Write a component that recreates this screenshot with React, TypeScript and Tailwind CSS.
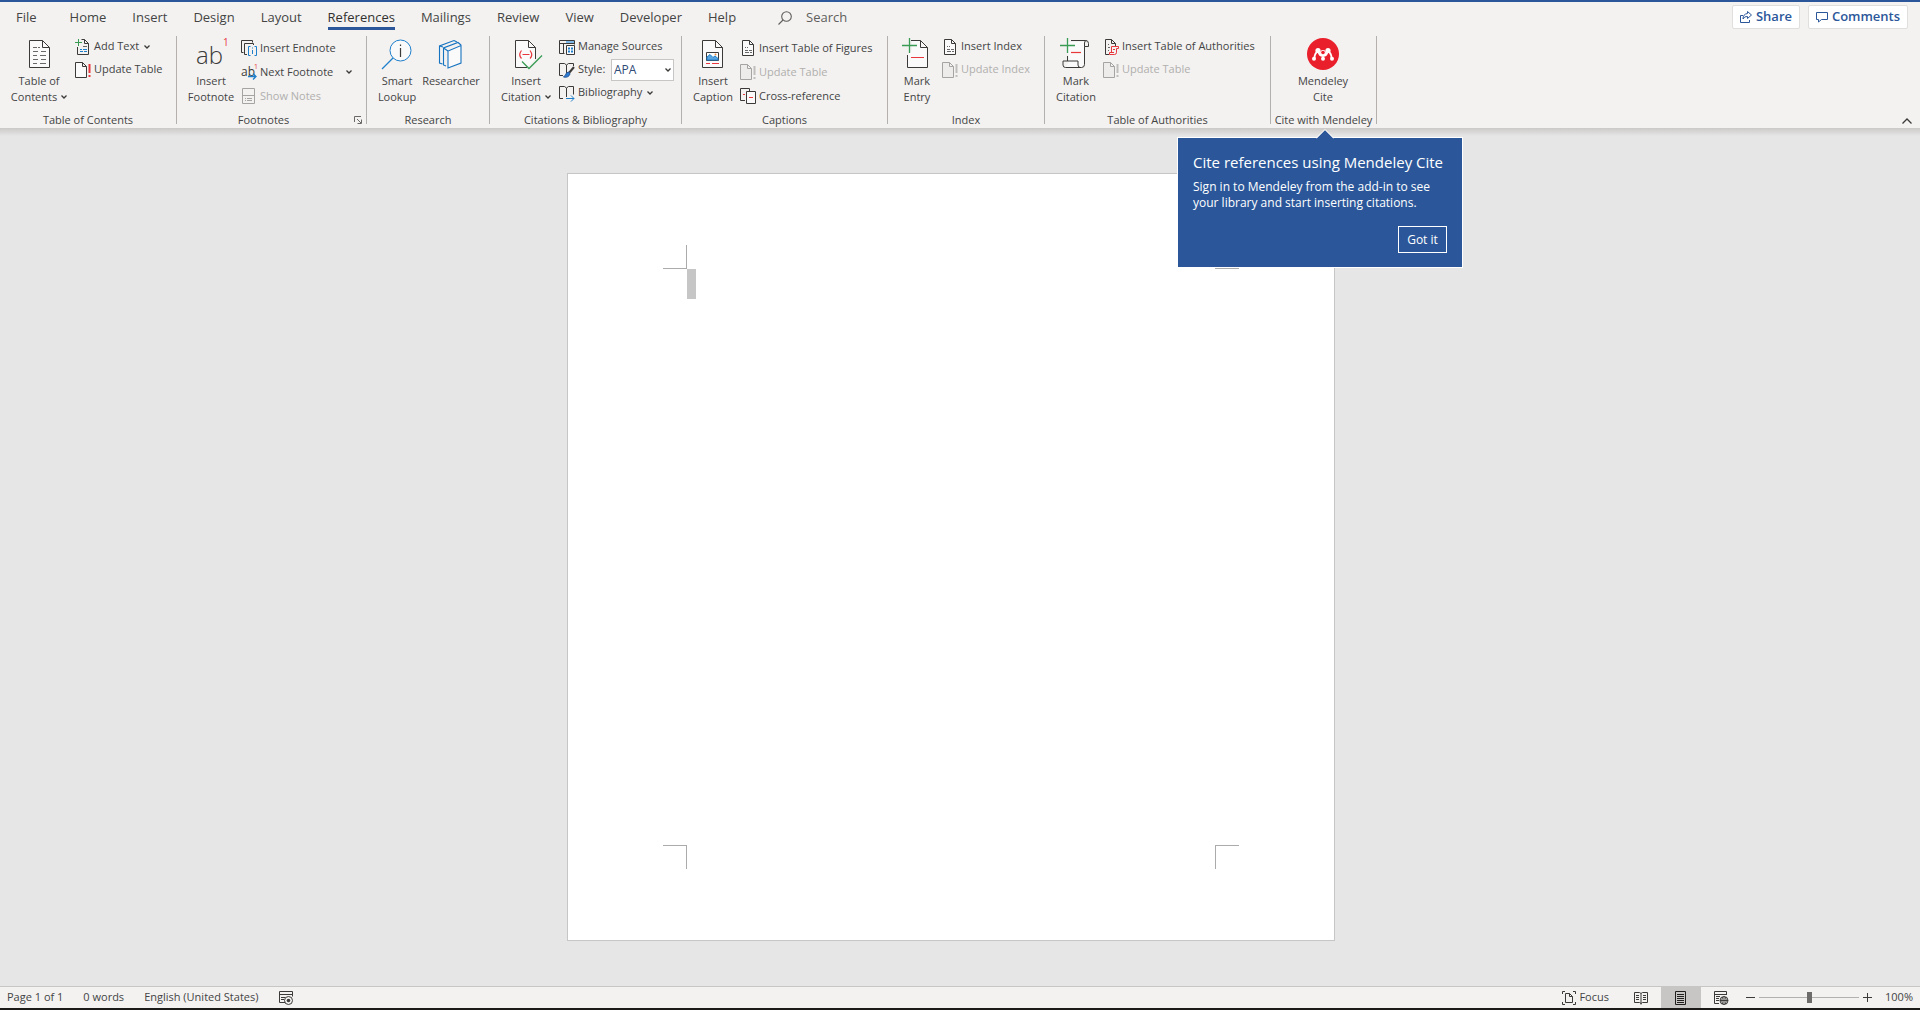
import { useState } from 'react';
import type { ReactNode } from 'react';

const INK = '#3b3a39';
const BLUE = '#1e7fcb';
const RED = '#e8383d';
const GREEN = '#3a9b55';
const GREY = '#a6a4a2';

interface IconProps {
  children: ReactNode;
}

// Small ribbon and status bar icons
function Icon16({ children }: IconProps) {
  return (
    <svg width="16" height="16" viewBox="0 0 16 16" fill="none" stroke={INK} className="shrink-0 overflow-visible" aria-hidden="true">
      {children}
    </svg>
  );
}

// Large ribbon icons
function Icon32({ children }: IconProps) {
  return (
    <svg width="32" height="32" viewBox="0 0 32 32" fill="none" stroke={INK} className="shrink-0 overflow-visible" aria-hidden="true">
      {children}
    </svg>
  );
}

function Chevron() {
  return (
    <svg width="6" height="4" viewBox="0 0 6 4" fill="none" stroke={INK} strokeWidth="1.3" className="shrink-0" aria-hidden="true">
      <path d="M.5 .5 3 3 5.500 .5" />
    </svg>
  );
}

function TocIcon() {
  return (
    <Icon32>
      <path d="M6.500 2.500h13l7 7v20h-20z" fill="#fafafa" />
      <path d="M19.500 2.500v7h7" />
      <path d="M10 9.500h4M15 9.500h2M10 13.500h5M10 17.500h4M10 21.500h5M10 25.500h4M18 13.500h5M17 17.500h6M18 21.500h5M17 25.500h6" stroke="#6a6866" />
    </Icon32>
  );
}

function FootnoteIcon() {
  return (
    <Icon32>
      <text x="1" y="26" fontSize="24" fontFamily="Open Sans" fontWeight="300" fill={INK} stroke="none">
        ab
        <tspan x="28" y="8" fontSize="10" fontWeight="400" fill={RED}>
          1
        </tspan>
      </text>
    </Icon32>
  );
}

function SmartLookupIcon() {
  return (
    <Icon32>
      <g stroke={BLUE}>
        <circle cx="19.500" cy="12.500" r="10.500" fill="#fafafa" />
        <path d="M12 20 1 31" strokeWidth="1.3" />
      </g>
      <path d="M19.500 10v9M19.500 6.500v1.500" strokeWidth="1.2" />
    </Icon32>
  );
}

function ResearcherIcon() {
  return (
    <Icon32>
      <g stroke="#1673c0" strokeWidth="1.1">
        <path d="M7.500 26l-3-1V8l14.500-5.500 3 1.500M4.500 8l3.500 1" />
        <path d="M11 28l-2.500-1V10L23 4.500l3 2.500M8.500 10l4.500 3" />
        <path d="M13 13v17l13-5V7.500z" fill="#fafafa" />
      </g>
    </Icon32>
  );
}

function InsertCitationIcon() {
  return (
    <Icon32>
      <path d="M17 29.500H5.500v-27h13l7 7V21" fill="#fafafa" />
      <path d="M18.500 2.500v7h7" />
      <path d="M11.500 12.500q-3.500 4.500 0 8M20 12.500q3.500 4.500 0 8M12.500 16.500h7" stroke={RED} strokeWidth="1.2" />
      <path d="M12 23.500l7 7 13-13" stroke={GREEN} strokeWidth="1.3" />
    </Icon32>
  );
}

function InsertCaptionIcon() {
  return (
    <Icon32>
      <path d="M5.500 2.500h13l7 7v20h-20z" fill="#fafafa" />
      <path d="M18.500 2.500v7h7" />
      <path d="M9.500 14.500h12v8h-12z" fill="#fff" />
      <path d="M10 19l3-2.500 3 3 2-1.500 3 2.500V22H10z" fill="#5aa5e0" stroke={BLUE} />
      <circle cx="18.500" cy="16.500" r="1" fill="#e8883a" stroke="none" />
      <path d="M9 25.500h4M15 25.500h7" stroke={RED} />
    </Icon32>
  );
}

function MarkEntryIcon() {
  return (
    <Icon32>
      <path d="M11 2.500h9l6.500 7v20h-20V17l4.500-5z" fill="#fafafa" stroke="none" />
      <path d="M10 2.500h9.500l7 7v20h-20V17M19.500 2.500v7h7" />
      <path d="M10 19.500h13" stroke={RED} />
      <path d="M8.500 0v15M1 7.500h15" stroke={GREEN} strokeWidth="1.3" />
    </Icon32>
  );
}

function MarkCitationIcon() {
  return (
    <Icon32>
      <path d="M8 4h16v20l-2 5H6l3-6z" fill="#fafafa" stroke="none" />
      <path d="M11 2.500h14.500q3 0 3 3v3h-4V5q0-2.500 2-2.500M24.500 8.500v18q0 3-3 3h-16q-2.500 0-2.500-2.500v-4h15v4q0 2.500 2.500 2.500M7.500 18v5" />
      <path d="M11 14.500h10" stroke={RED} strokeWidth="1.2" />
      <path d="M7.500 0v15M0 7.500h15" stroke={GREEN} strokeWidth="1.3" />
    </Icon32>
  );
}

function MendeleyIcon() {
  return (
    <Icon32>
      <circle cx="16" cy="16" r="16" fill="#e9202c" stroke="none" />
      <path d="M7.500 20q0-4.500 3.500-7M24.500 20q0-4.500-3.500-7M11 12.500q1 5.500 5 5.500t5-5.500M16 17.500v3" stroke="#fff" strokeWidth="1.800" />
      <g fill="#fff" stroke="none">
        <circle cx="11" cy="12.500" r="2.600" />
        <circle cx="21" cy="12.500" r="2.600" />
        <circle cx="7" cy="20.800" r="2" />
        <circle cx="16" cy="20.800" r="2" />
        <circle cx="25" cy="20.800" r="2" />
        <circle cx="16" cy="15" r="3" />
      </g>
      <circle cx="16" cy="14.500" r="1.800" fill="#e9202c" stroke="none" />
    </Icon32>
  );
}

function AddTextIcon() {
  return (
    <Icon16>
      <path d="M6.500.5h3l4 4v11h-11V8M9.500.5v4h4" />
      <path d="M3.500 0v7M0 3.500h7" stroke={GREEN} />
      <path d="M5 10.500h2M8 10.500h4M5 12.500h3M9 12.500h3" stroke={BLUE} />
      <path d="M8 7.500h4" stroke="#6a6866" />
    </Icon16>
  );
}

function UpdateIcon({ muted = false }: { muted?: boolean }) {
  return (
    <Icon16>
      <path d="M.5.5h7l4 4v11H.5zM7.500.5v4h4" stroke={muted ? GREY : INK} fill={muted ? '#eeecea' : '#fafafa'} />
      <path d="M14.500 2v9M14.500 13v2" stroke={muted ? '#c0bebc' : RED} strokeWidth="2" />
    </Icon16>
  );
}

function EndnoteIcon() {
  return (
    <Icon16>
      <path d="M2.500 12.500h-2V.5h11v2" />
      <path d="M6 14.500H3.500v-11h9V5" />
      <path d="M9.500 6.500h-2v9h2M13.500 6.500h2v9h-2M11.500 10v4M11.500 7.500v1" stroke={BLUE} />
    </Icon16>
  );
}

function NextFootnoteIcon() {
  return (
    <Icon16>
      <text x="0" y="12" fontSize="12" fontFamily="Open Sans" fill={INK} stroke="none">
        ab
        <tspan x="13" y="5" fontSize="7" fill={RED}>
          1
        </tspan>
      </text>
      <path d="M7 12.500h8M12 9.500l3 3-3 3" stroke={BLUE} strokeWidth="1.3" />
    </Icon16>
  );
}

function ShowNotesIcon() {
  return (
    <Icon16>
      <path d="M1.500.5h12v15h-12zM1.500 7.500h12M4 10.500h1M6 10.500h5M4 12.500h1M6 12.500h5" stroke={GREY} />
    </Icon16>
  );
}

function SourcesIcon() {
  return (
    <Icon16>
      <path d="M5.500 14.500h-5V1.500h15v4M.5 4.500h15M4.500 4.500v10" />
      <path d="M7 3h8" stroke="#7fb8e6" strokeWidth="2" />
      <path d="M7.500 6.500h8v9h-8z" fill="#fafafa" />
      <path d="M9 9.500h2M12 9.500h2M9 12.500h2M12 12.500h2" stroke={BLUE} strokeWidth="2" />
    </Icon16>
  );
}

function StyleIcon() {
  return (
    <Icon16>
      <path d="M4 13.500H.5v-12h5l2 1.500 2-1.500h5V4M7.500 3v8" />
      <path d="M15 5l-5 6" strokeWidth="2" />
      <path d="M10 10q-3 0-3.500 3l-2 2q5 1 6.500-3z" fill="#2b7cd3" stroke="#2b579a" />
    </Icon16>
  );
}

function BibliographyIcon() {
  return (
    <Icon16>
      <path d="M4 13.500H.5v-12h5l2 1.500 2-1.500h5v8M7.500 3v9" />
      <path d="M7 13.500h8M12 10.500l3 3-3 3" stroke={BLUE} />
    </Icon16>
  );
}

function FiguresIcon() {
  return (
    <Icon16>
      <path d="M2.500.5h7l4 4v11h-11z" fill="#fafafa" />
      <path d="M9.500.5v4h4" />
      <path d="M5 7.500h1M7 7.500h1M5 10.500h3M9 10.500h3M5 12.500h4M10 12.500h2" stroke="#6a6866" />
    </Icon16>
  );
}

function CrossReferenceIcon() {
  return (
    <Icon16>
      <path d="M5 12.500H.5V.5h9V3" />
      <path d="M6.500 3.500h9v12h-9z" fill="#fafafa" />
      <path d="M3 6.500h2M9 9.500h4" stroke={RED} />
    </Icon16>
  );
}

function AuthoritiesIcon() {
  return (
    <Icon16>
      <path d="M6 15.500H2.500V.5h6l4 4V7M8.500.5v4h4" />
      <path d="M5 5.500h1M5 8.500h2M5 11.500h1" stroke="#6a6866" />
      <path d="M8.500 13V7.500h7v2h-2v4q0 2-2 2h-5v-2h4.500M10 10.500h2" stroke={RED} />
    </Icon16>
  );
}

interface BigButtonProps {
  icon: ReactNode;
  lines: string[];
  width: string;
  menu?: boolean;
}

function BigButton({ icon, lines, width, menu }: BigButtonProps) {
  return (
    <button className={`flex shrink-0 flex-col items-center pt-[2px] leading-4 hover:bg-[#e1dfdd] ${width}`}>
      {icon}
      <span className="mt-[3px] whitespace-nowrap">{lines[0]}</span>
      {lines[1] && (
        <span className="flex items-center gap-1 whitespace-nowrap">
          {lines[1]}
          {menu && <Chevron />}
        </span>
      )}
    </button>
  );
}

interface SmallButtonProps {
  icon: ReactNode;
  label: string;
  menu?: boolean;
  split?: boolean;
  disabled?: boolean;
}

function SmallButton({ icon, label, menu, split, disabled }: SmallButtonProps) {
  return (
    <button disabled={disabled} className="flex items-center gap-[3px] whitespace-nowrap enabled:hover:bg-[#e1dfdd] disabled:text-[#b1afad]">
      {icon}
      {label}
      {menu && (
        <span className="ml-[2px]">
          <Chevron />
        </span>
      )}
      {split && (
        <span className="ml-[10px]">
          <Chevron />
        </span>
      )}
    </button>
  );
}

interface GroupProps {
  label: string;
  width: string;
  children: ReactNode;
  launcher?: boolean;
}

function Group({ label, width, children, launcher }: GroupProps) {
  return (
    <section aria-label={label} className={`relative flex h-[88px] shrink-0 flex-col border-r border-[#b3b0ad] ${width}`}>
      <div className="flex h-19 shrink-0 items-start">{children}</div>
      <div className={`flex h-4 shrink-0 items-center justify-center whitespace-nowrap ${launcher ? 'pr-4' : ''}`}>{label}</div>
      {launcher && (
        <button aria-label={`${label} settings`} className="absolute right-1 bottom-0">
          <svg width="8" height="8" viewBox="0 0 8 8" fill="none" stroke="#6a6866" aria-hidden="true">
            <path d="M.5 6V.5H7M3 3l4 4M7.500 3.500v4h-4" />
          </svg>
        </button>
      )}
    </section>
  );
}

function MendeleyCallout() {
  return (
    <div role="dialog" aria-label="Mendeley Cite" className="absolute top-[101px] -left-[94px] z-10 w-[286px] border border-white bg-[#2b579a] px-[15px] py-[14px] text-white">
      <svg width="18" height="10" viewBox="0 0 18 10" className="absolute -top-[9px] left-[138px]" aria-hidden="true">
        <path d="M0 10 9 1l9 9z" fill="#2b579a" />
        <path d="M0 9.500 9 .5l9 9" fill="none" stroke="#fff" />
      </svg>
      <h2 className="text-[15px] leading-5 font-medium whitespace-nowrap">Cite references using Mendeley Cite</h2>
      <p className="mt-[7px] text-xs leading-4 whitespace-nowrap">
        Sign in to Mendeley from the add-in to see
        <br />
        your library and start inserting citations.
      </p>
      <div className="mt-[15px] flex justify-end">
        <button className="h-[27px] w-[49px] border border-white text-xs">Got it</button>
      </div>
    </div>
  );
}

const tabs = ['File', 'Home', 'Insert', 'Design', 'Layout', 'References', 'Mailings', 'Review', 'View', 'Developer', 'Help'];

function TabBar() {
  const [active, setActive] = useState('References');

  return (
    <div className="flex h-[34px] items-start text-[#444]">
      <nav className="flex gap-[26px] pl-4 text-[13px]">
        {tabs.map((tab) => (
          <button
            key={tab}
            onClick={() => setActive(tab)}
            className={`h-7 border-b-3 pt-1 leading-5 first:mr-[7px] ${
              active === tab ? 'border-[#2b579a] font-medium text-[#323130]' : 'border-transparent'
            }`}
          >
            {tab}
          </button>
        ))}
      </nav>
      <label className="ml-[42px] flex h-8 items-center gap-[14px] text-[13px]">
        <svg width="14" height="14" viewBox="0 0 14 14" fill="none" stroke="#605e5c" strokeWidth="1.100" aria-hidden="true">
          <circle cx="8.500" cy="5.500" r="4.800" />
          <path d="M5 9 .5 13.500" />
        </svg>
        <input type="text" aria-label="Search" placeholder="Search" className="w-40 bg-transparent outline-none placeholder:text-[#605e5c]" />
      </label>
      <div className="mt-[3px] mr-3 ml-auto flex gap-2 text-[13px] font-semibold text-[#2b579a]">
        <button className="flex h-6 w-[68px] items-center justify-center gap-1 rounded-xs border border-[#e1dfdd] bg-white">
          <svg width="12" height="12" viewBox="0 0 12 12" fill="none" stroke="#2b579a" aria-hidden="true">
            <path d="M3 4.500H.5v7h9V9M7.500.5l4 3.500-4 3.500V5.500Q4.500 5 3 8q0-5 4.500-5.500z" />
          </svg>
          Share
        </button>
        <button className="flex h-6 w-[100px] items-center justify-center gap-1 rounded-xs border border-[#e1dfdd] bg-white">
          <svg width="12" height="12" viewBox="0 0 12 12" fill="none" stroke="#2b579a" aria-hidden="true">
            <path d="M.5 1.500h11v7h-6l-3 2.500V8.500h-2z" />
          </svg>
          Comments
        </button>
      </div>
    </div>
  );
}

function Ribbon() {
  return (
    <div className="relative z-10 flex h-[92px] text-[11px] text-[#444]">
      <Group label="Table of Contents" width="w-[177px]">
        <BigButton icon={<TocIcon />} lines={['Table of', 'Contents']} width="ml-[6px] w-[66px]" menu />
        <div className="-mt-px ml-[3px] grid auto-rows-[23px]">
          <SmallButton icon={<AddTextIcon />} label="Add Text" menu />
          <SmallButton icon={<UpdateIcon />} label="Update Table" />
        </div>
      </Group>

      <Group label="Footnotes" width="w-[190px]" launcher>
        <BigButton icon={<FootnoteIcon />} lines={['Insert', 'Footnote']} width="ml-1 w-[60px]" />
        <div className="grid auto-rows-[24px]">
          <SmallButton icon={<EndnoteIcon />} label="Insert Endnote" />
          <SmallButton icon={<NextFootnoteIcon />} label="Next Footnote" split />
          <SmallButton icon={<ShowNotesIcon />} label="Show Notes" disabled />
        </div>
      </Group>

      <Group label="Research" width="w-[123px]">
        <BigButton icon={<SmartLookupIcon />} lines={['Smart', 'Lookup']} width="ml-1 w-[52px]" />
        <BigButton icon={<ResearcherIcon />} lines={['Researcher']} width="w-[56px]" />
      </Group>

      <Group label="Citations &amp; Bibliography" width="w-[192px]">
        <BigButton icon={<InsertCitationIcon />} lines={['Insert', 'Citation']} width="ml-[3px] w-[66px]" menu />
        <div className="-mt-px grid auto-rows-[23px]">
          <SmallButton icon={<SourcesIcon />} label="Manage Sources" />
          <div className="flex items-center gap-[3px]">
            <StyleIcon />
            <label htmlFor="citation-style" className="w-7">
              Style:
            </label>
            <span className="relative ml-[2px] flex items-center">
              <select id="citation-style" defaultValue="APA" className="h-[22px] w-[63px] appearance-none border border-[#c8c6c4] bg-white pl-[2px] text-xs text-[#2f4a75]">
                <option>APA</option>
                <option>Chicago</option>
                <option>MLA</option>
              </select>
              <span className="pointer-events-none absolute right-[3px]">
                <Chevron />
              </span>
            </span>
          </div>
          <SmallButton icon={<BibliographyIcon />} label="Bibliography" menu />
        </div>
      </Group>

      <Group label="Captions" width="w-[206px]">
        <BigButton icon={<InsertCaptionIcon />} lines={['Insert', 'Caption']} width="ml-1 w-[54px]" />
        <div className="grid auto-rows-[24px]">
          <SmallButton icon={<FiguresIcon />} label="Insert Table of Figures" />
          <SmallButton icon={<UpdateIcon muted />} label="Update Table" disabled />
          <SmallButton icon={<CrossReferenceIcon />} label="Cross-reference" />
        </div>
      </Group>

      <Group label="Index" width="w-[157px]">
        <BigButton icon={<MarkEntryIcon />} lines={['Mark', 'Entry']} width="ml-1 w-[50px]" />
        <div className="-mt-px grid auto-rows-[23px]">
          <SmallButton icon={<FiguresIcon />} label="Insert Index" />
          <SmallButton icon={<UpdateIcon muted />} label="Update Index" disabled />
        </div>
      </Group>

      <Group label="Table of Authorities" width="w-[226px]">
        <BigButton icon={<MarkCitationIcon />} lines={['Mark', 'Citation']} width="ml-1 w-[54px]" />
        <div className="-mt-px grid auto-rows-[23px]">
          <SmallButton icon={<AuthoritiesIcon />} label="Insert Table of Authorities" />
          <SmallButton icon={<UpdateIcon muted />} label="Update Table" disabled />
        </div>
      </Group>

      <Group label="Cite with Mendeley" width="w-[106px]">
        <BigButton icon={<MendeleyIcon />} lines={['Mendeley', 'Cite']} width="w-[104px]" />
        <MendeleyCallout />
      </Group>

      <button aria-label="Collapse the ribbon" className="mr-2 mb-1 ml-auto self-end">
        <svg width="10" height="6" viewBox="0 0 10 6" fill="none" stroke={INK} strokeWidth="1.300" aria-hidden="true">
          <path d="M.5 5.500 5 1l4.500 4.500" />
        </svg>
      </button>
    </div>
  );
}

function Document() {
  return (
    <main className="flex flex-1 justify-center bg-[#e6e6e6] bg-linear-to-b from-[#cbc9c8] to-[#e6e6e6] to-[8px] py-[45px] pr-[18px]">
      <article className="flex h-[768px] w-[768px] flex-col justify-between border border-[#c6c6c6] bg-white px-[95px] py-[71px]">
        <div>
          <div className="flex justify-between">
            <span className="size-6 border-r border-b border-[#ababab]" />
            <span className="size-6 border-b border-l border-[#ababab]" />
          </div>
          <div className="ml-6 h-[30px] w-[9px] bg-[#c6c6c6]" />
        </div>
        <div className="flex justify-between">
          <span className="size-6 border-t border-r border-[#ababab]" />
          <span className="size-6 border-t border-l border-[#ababab]" />
        </div>
      </article>
    </main>
  );
}

function StatusBar() {
  const [zoom, setZoom] = useState(100);

  return (
    <footer className="flex h-6 items-center border-t border-b-2 border-t-[#c8c6c4] border-b-[#1b1a19] bg-[#f3f2f1] text-[11px] text-[#444]">
      <span className="pl-[7px]">Page 1 of 1</span>
      <span className="ml-5">0 words</span>
      <span className="ml-5">English (United States)</span>
      <button aria-label="Macro recording" className="ml-5">
        <Icon16>
          <path d="M7 12.500H1.500v-11h13v5M1.500 4.500h13M3 7.500h4M3 9.500h3" />
          <circle cx="10.500" cy="10.500" r="4" />
          <circle cx="10.500" cy="10.500" r="1.800" fill={INK} stroke="none" />
        </Icon16>
      </button>

      <button className="ml-auto flex items-center gap-[2px]">
        <Icon16>
          <path d="M1.500 4V1.500H4M12 1.500h2.500V4M14.500 12v2.500H12M4 14.500H1.500V12" />
          <path d="M4.500 3.500h4l3 3v6h-7zM8.500 3.500v3h3" />
        </Icon16>
        Focus
      </button>
      <button aria-label="Read mode" className="ml-3 flex h-full w-10 items-center justify-center">
        <Icon16>
          <path d="M8 3.500 6.500 2.500h-5v10h5L8 13.500l1.500-1h5v-10h-5zM8 3.500v11M3 5.500h3M3 7.500h3M3 9.500h3M10 5.500h3M10 7.500h3M10 9.500h3" />
        </Icon16>
      </button>
      <button aria-label="Print layout" aria-pressed="true" className="flex h-full w-10 items-center justify-center bg-[#c8c6c4]">
        <Icon16>
          <path d="M2.500 1.500h10v13h-10zM4 4.500h7M4 6.500h7M4 8.500h7M4 10.500h7M4 12.500h7" stroke="#201f1e" />
        </Icon16>
      </button>
      <button aria-label="Web layout" className="flex h-full w-10 items-center justify-center">
        <Icon16>
          <path d="M6 13.500H1.500v-12h12V5M1.500 4.500h12M3 6.500h4M3 8.500h3M3 10.500h3" />
          <circle cx="11" cy="10.500" r="4" />
          <path d="M7 10.500h8M11 6.500v8M9.500 7q-1.500 3.500 0 7M12.500 7q1.500 3.500 0 7" />
        </Icon16>
      </button>
      <button aria-label="Zoom out" className="ml-[5px]">
        <svg width="9" height="9" viewBox="0 0 9 9" stroke={INK} aria-hidden="true">
          <path d="M0 4.500h9" />
        </svg>
      </button>
      <input
        type="range"
        aria-label="Zoom"
        min={10}
        max={190}
        value={zoom}
        onChange={(e) => setZoom(Number(e.target.value))}
        className="mx-1 h-[11px] w-[100px] appearance-none bg-transparent [&::-webkit-slider-runnable-track]:h-px [&::-webkit-slider-runnable-track]:bg-[#b3b0ad] [&::-webkit-slider-thumb]:-mt-[5px] [&::-webkit-slider-thumb]:h-[11px] [&::-webkit-slider-thumb]:w-[5px] [&::-webkit-slider-thumb]:appearance-none [&::-webkit-slider-thumb]:bg-[#6e6c6a]"
      />
      <button aria-label="Zoom in">
        <svg width="9" height="9" viewBox="0 0 9 9" stroke={INK} aria-hidden="true">
          <path d="M0 4.500h9M4.500 0v9" />
        </svg>
      </button>
      <span className="w-12 pr-[7px] text-right">{zoom}%</span>
    </footer>
  );
}

export default function App() {
  return (
    <div className="flex min-h-screen flex-col bg-[#f3f2f1] font-['Open_Sans','Noto_Sans',sans-serif]">
      <header className="border-t-2 border-[#2b579a]">
        <TabBar />
        <Ribbon />
      </header>
      <Document />
      <StatusBar />
    </div>
  );
}
